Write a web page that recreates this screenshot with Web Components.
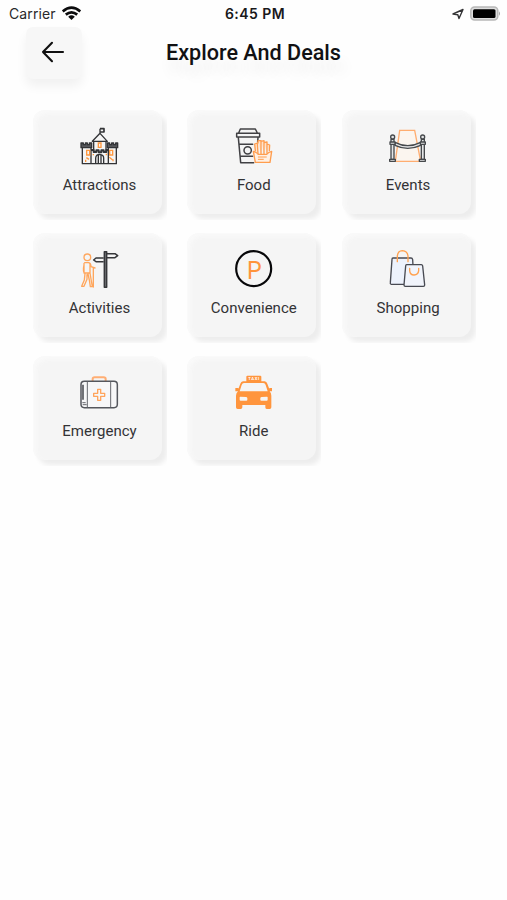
<!DOCTYPE html>
<html lang="en">
<head>
<meta charset="utf-8">
<meta name="viewport" content="width=device-width, initial-scale=1">
<title>Explore And Deals</title>
<style>
  body {
    margin: 0;
    background: #fefefe;
    font-family: Roboto, "Liberation Sans", sans-serif;
  }
</style>
</head>
<body>
<explore-screen></explore-screen>

<script>
// Icons share one 180x150 grid, shown at 60x50
const ICONS = {
  castle: `
    <g fill="none" stroke="#333437" stroke-width="4" stroke-linejoin="round">
      <path fill="#55565a" d="M33 69h7v5h6v-5h6v5h6v-5h7v14H33z"/>
      <path fill="#55565a" d="M112 69h7v5h6v-5h6v5h6v-5h6v14h-31z"/>
      <path d="M37 83V131H63V83M115 83v48h24V83M63 131h52"/>
      <path d="M67 64L90 40L112 64zM71 65V94M108 65V94M90 40V26"/>
      <path d="M90 26H102V36H90" stroke-width="5"/>
      <path d="M63 90h8v6h8v-5h7v6h8v-6h7v5h8v-6h6" stroke-width="6"/>
      <path d="M77 131V114Q78 103 89 103Q101 104 101 114V131M85 106V131M93 106V131"/>
    </g>
    <g fill="none" stroke="#ff983f" stroke-width="4">
      <path d="M85 69h8v13h-8zM50 91h9v14h-9zM119 91h9v14h-9z"/>
      <path d="M49 113l8 5M47 119v7M118 112l9 7M129 118v6M70 106v-4M109 106v-5"/>
    </g>`,
  food: `
    <g fill="none" stroke="#414144" stroke-width="4.5" stroke-linejoin="round" stroke-linecap="round">
      <path d="M42 39L47 27H92L98 39M36 40H105V51H36zM41 53L48 128H87M100 53L99 65M43 73H84M47 109H84"/>
      <circle cx="69" cy="91" r="11"/>
    </g>
    <g fill="none" stroke="#ff9d4e" stroke-width="4" stroke-linejoin="round" stroke-linecap="round">
      <path fill="#fff0e3" d="M86 94Q96 96 101 103H126Q131 96 141 94L136 127H92z"/>
      <path fill="#ffe3cc" d="M92 92L90 72L98 69L100 101M100 69V62H109V101M109 64L118 62V101M118 68L127 66V100M127 72L135 75L134 92"/>
      <path d="M101 111H125M101 118H116" stroke-width="3"/>
    </g>`,
  events: `
    <path d="M49 124L62 31H107L125 124z" fill="#fbf5ef" stroke="#ffad70" stroke-width="4"/>
    <g fill="#e4e5e6" stroke="#46494c" stroke-width="4" stroke-linejoin="round">
      <path d="M48 67Q86 87 125 67V76Q86 94 48 76z"/>
      <path d="M36 58H45V118H36zM127 58H136V118H127z"/>
      <path d="M32 118H49V124H32zM121 118H139V124H121z"/>
      <path d="M33 66H48V73H33zM124 66H139V73H124z"/>
      <circle cx="41" cy="51" r="6"/><circle cx="131" cy="51" r="6"/>
    </g>`,
  activities: `
    <g fill="none" stroke="#ffa65c" stroke-width="4" stroke-linejoin="round" stroke-linecap="round">
      <circle cx="52" cy="41" r="10"/>
      <path d="M44 57H56Q63 59 63 69L75 73M42 59V88H60V62M42 64Q37 87 45 89M45 90L43 109L35 128H42L51 107V93M54 91L58 109L61 129H67L63 106L60 88M70 72V130"/>
    </g>
    <g fill="none" stroke="#36373a" stroke-width="4.5" stroke-linejoin="round">
      <path fill="#707174" d="M103 24H110V131H103z"/>
      <path d="M111 30H135L143 36L135 42H111M101 43H78L71 49L78 54H101"/>
    </g>`,
  parking: `
    <circle cx="86" cy="75" r="52.5" fill="none" stroke="#08080a" stroke-width="6.5"/>
    <text x="66" y="105" font-size="77" fill="#ff943b" textLength="44" lengthAdjust="spacingAndGlyphs">P</text>`,
  shopping: `
    <g stroke="#484a52" stroke-width="4" stroke-linejoin="round">
      <path fill="#edf2fc" d="M42 43H96Q100 43 101 48L105 120Q105 122 102 122H37Q33 121 34 117L39 47Q39 43 42 43z"/>
      <path fill="#f1f4fb" d="M83 63H127Q130 63 131 67L137 124Q137 128 133 128H79Q75 128 75 124L80 67Q80 63 83 63z"/>
    </g>
    <g fill="none" stroke="#ffa14f" stroke-width="4" stroke-linecap="round">
      <path d="M55 54V38Q56 21 70 21Q86 22 87 38V54M92 74V81Q93 94 105 94Q118 93 119 81V74"/>
    </g>`,
  emergency: `
    <path d="M68 46V39Q68 34 74 34H101Q107 34 107 39V46" fill="none" stroke="#ffae74" stroke-width="6"/>
    <rect x="33" y="46" width="109" height="79" rx="10" fill="#f7f7f8" stroke="#55575d" stroke-width="4.5"/>
    <path d="M52 47V124M122 47V124M37 110H47M38 116H50" fill="none" stroke="#66686e" stroke-width="3"/>
    <path d="M39 56V101" stroke="#55575d" stroke-width="5"/>
    <path d="M83 70H92V82H104V91H92V103H83V91H71V82H83z" fill="none" stroke="#ffa45c" stroke-width="4" stroke-linejoin="round"/>`,
  taxi: `
    <path fill="#ff953d" fill-rule="evenodd" d="M68 29H107Q110 29 110 32V46H120Q126 47 128 53L134 69V66H142V76H135Q140 81 140 89V124Q140 129 135 129H126Q122 129 122 124V117H53V124Q53 129 48 129H39Q34 129 34 124V89Q34 81 40 76H32V66H41V69L47 53Q49 47 55 46H65V32Q65 29 68 29zM58 51Q53 51 51 57L45 76H129L123 57Q121 51 116 51zM47 92Q45 92 45 94V101Q45 104 48 104H65Q68 104 68 101V96Q67 93 64 93zM127 92Q129 92 129 94V101Q129 104 126 104H110Q107 104 107 101V96Q108 93 111 93z"/>
    <text x="71" y="42.5" font-size="12.5" font-weight="700" fill="#fff" textLength="33" lengthAdjust="spacing">TAXI</text>`
};

class StatusBar extends HTMLElement {
  constructor() {
    super();
    this.attachShadow({ mode: 'open' });
  }

  connectedCallback() {
    this.shadowRoot.innerHTML = `
      <style>
        :host {
          display: grid;
          grid-template-columns: 1fr auto 1fr;
          align-items: center;
          height: 27px;
          padding: 0 6px 0 9px;
          box-sizing: border-box;
          font: 14px Inter, sans-serif;
          color: #29292b;
        }
        .carrier, .power { display: flex; align-items: center; }
        .carrier { gap: 6px; letter-spacing: 0.1px; }
        .power { justify-content: flex-end; gap: 6px; }
        .time { font-weight: 600; font-size: 14px; letter-spacing: 0.45px; color: #19191b; }
        svg { display: block; }
      </style>
      <div class="carrier">
        <span>Carrier</span>
        <svg width="19" height="15" viewBox="0 0 19 15" fill="none" stroke="#0c0c0d" stroke-width="2.7">
          <path d="M.7 5.4Q9.5-2 18.3 5.4M3.8 8.6Q9.5 4 15.2 8.6"/>
          <path d="M6.2 10.7Q9.5 8 12.8 10.7L9.5 14z" fill="#0c0c0d" stroke="none"/>
        </svg>
      </div>
      <span class="time">6:45 PM</span>
      <div class="power">
        <svg width="12" height="12" viewBox="0 0 12 12" fill="none" stroke="#343436" stroke-width="1.4" stroke-linejoin="round">
          <path d="M1 6L11 1.5L7 10.5L5.8 6.8z"/>
        </svg>
        <svg width="31" height="15" viewBox="0 0 31 15">
          <rect x=".8" y="1" width="27" height="13" rx="3.8" fill="#dedede" stroke="#b8b8b8" stroke-width="1.5"/>
          <rect x="3" y="3.2" width="22.5" height="8.8" rx="1.5" fill="#000"/>
          <path d="M29 5.2Q31 7.5 29 9.8z" fill="#a5a5a5"/>
        </svg>
      </div>
    `;
  }
}

class PageHeader extends HTMLElement {
  constructor() {
    super();
    this.attachShadow({ mode: 'open' });
  }

  connectedCallback() {
    this.shadowRoot.innerHTML = `
      <style>
        :host {
          display: grid;
          grid-template-columns: 56px 1fr 56px;
          align-items: center;
          height: 52px;
          padding: 0 26px;
        }
        button {
          display: grid;
          place-items: center;
          width: 56px;
          height: 52px;
          padding: 0 3px 2px 0;
          border: 0;
          border-radius: 7px;
          background: #f7f7f7;
          box-shadow: 0 7px 11px rgba(0, 0, 0, 0.055);
        }
        h1 {
          margin: 0;
          text-align: center;
          font-size: 21.6px;
          line-height: 26px;
          font-weight: 500;
          color: #111113;
          text-shadow: 4px 13px 14px rgba(0, 0, 0, 0.08);
        }
      </style>
      <button aria-label="Back">
        <svg width="24" height="22" viewBox="0 0 24 22" fill="none" stroke="#111" stroke-width="2.1" stroke-linecap="round" stroke-linejoin="round">
          <path d="M22 11H2M11 1.8L2 11L11 20.2"/>
        </svg>
      </button>
      <h1><slot></slot></h1>
    `;
  }
}

class CategoryTile extends HTMLElement {
  constructor() {
    super();
    this.attachShadow({ mode: 'open' });
  }

  connectedCallback() {
    const icon = this.getAttribute('icon');
    const shift = this.getAttribute('shift') || '0 0';

    // The host clips the soft shadow into a square outer corner
    this.shadowRoot.innerHTML = `
      <style>
        :host {
          display: block;
          width: 134px;
          height: 110px;
          overflow: hidden;
        }
        .card {
          display: flex;
          flex-direction: column;
          align-items: center;
          box-sizing: border-box;
          width: 129px;
          height: 104px;
          padding: 10px 0 0 4px;
          border-radius: 12px;
          background: #f5f5f5;
          box-shadow: 5px 5px 5px rgba(0, 0, 0, 0.07), inset 3px 3px 5px #fafafa;
        }
        svg { display: block; flex: none; font-family: Roboto, sans-serif; }
        .label {
          margin-top: 6px;
          font-size: 15px;
          line-height: 18px;
          letter-spacing: 0.02px;
          color: #333335;
        }
      </style>
      <div class="card">
        <svg width="60" height="50" viewBox="${shift} 180 150">${ICONS[icon]}</svg>
        <span class="label"><slot></slot></span>
      </div>
    `;
  }
}

class ExploreScreen extends HTMLElement {
  constructor() {
    super();
    this.attachShadow({ mode: 'open' });
  }

  connectedCallback() {
    this.shadowRoot.innerHTML = `
      <style>
        :host { display: block; width: 507px; height: 900px; overflow: hidden; }
        .grid {
          display: grid;
          grid-template-columns: repeat(3, 134px);
          gap: 13px 20.3px;
          padding: 31px 0 0 33px;
        }
      </style>
      <status-bar></status-bar>
      <page-header>Explore And Deals</page-header>
      <div class="grid">
        <category-tile icon="castle">Attractions</category-tile>
        <category-tile icon="food" shift="-2 0">Food</category-tile>
        <category-tile icon="events" shift="-3 0">Events</category-tile>
        <category-tile icon="activities" shift="0 -2">Activities</category-tile>
        <category-tile icon="parking" shift="-3 -2">Convenience</category-tile>
        <category-tile icon="shopping" shift="-3 -2">Shopping</category-tile>
        <category-tile icon="emergency">Emergency</category-tile>
        <category-tile icon="taxi" shift="-2 0">Ride</category-tile>
      </div>
    `;
  }
}

customElements.define('status-bar', StatusBar);
customElements.define('page-header', PageHeader);
customElements.define('category-tile', CategoryTile);
customElements.define('explore-screen', ExploreScreen);
</script>
</body>
</html>
